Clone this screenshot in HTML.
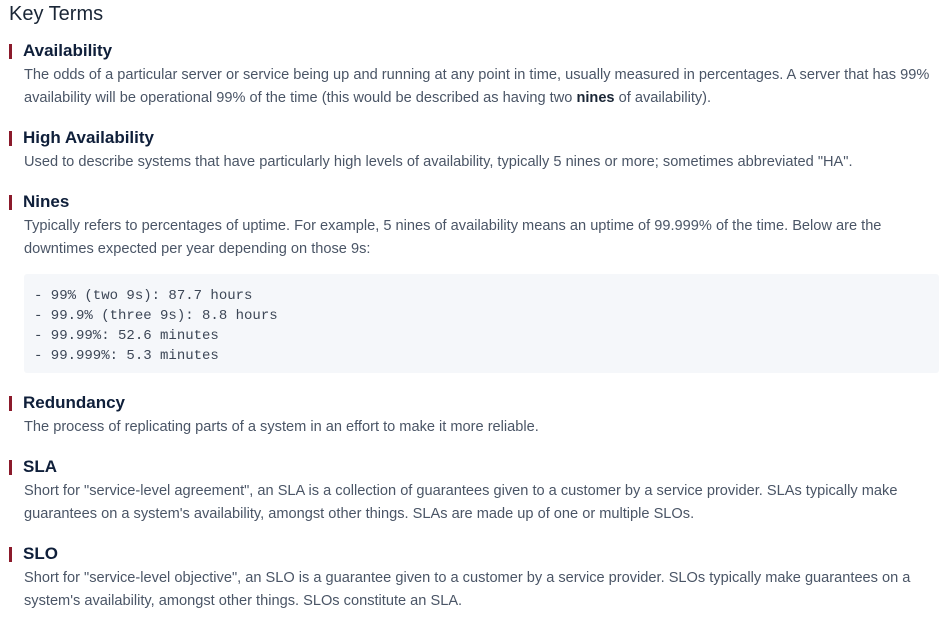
<!DOCTYPE html>
<html><head><style>
body{margin:0;background:#fff;font-family:"Liberation Sans",sans-serif;width:939px;height:626px;overflow:hidden;position:relative}
.t{position:absolute;left:9px;top:3px;font-size:20px;color:#1a2636;margin:0;font-weight:normal}
.h{position:absolute;left:9px;font-size:17px;font-weight:bold;color:#0f1f3a;height:20px;line-height:20px;padding-left:14px}
.h:before{content:"";position:absolute;left:0;top:3px;width:3px;height:15px;background:#8b1a2b}
.p{position:absolute;left:24px;right:0px;font-size:14.6px;line-height:23px;color:#4a5566}
.p b{color:#1a2636}
.c{position:absolute;left:24px;width:915px;top:274px;height:99px;background:#f5f7fa;border-radius:3px;box-sizing:border-box;padding:12px 0 0 10px;font-family:"Liberation Mono",monospace;font-size:14px;line-height:20px;color:#3c4656;white-space:pre}
</style></head><body>
<h1 class="t">Key Terms</h1>
<div class="h" style="top:41px">Availability</div>
<div class="p" style="top:64px">The odds of a particular server or service being up and running at any point in time, usually measured in percentages. A server that has 99% availability will be operational 99% of the time (this would be described as having two <b>nines</b> of availability).</div>
<div class="h" style="top:128px">High Availability</div>
<div class="p" style="top:151px">Used to describe systems that have particularly high levels of availability, typically 5 nines or more; sometimes abbreviated "HA".</div>
<div class="h" style="top:192px">Nines</div>
<div class="p" style="top:215px">Typically refers to percentages of uptime. For example, 5 nines of availability means an uptime of 99.999% of the time. Below are the<br>downtimes expected per year depending on those 9s:</div>
<div class="c">- 99% (two 9s): 87.7 hours
- 99.9% (three 9s): 8.8 hours
- 99.99%: 52.6 minutes
- 99.999%: 5.3 minutes</div>
<div class="h" style="top:393px">Redundancy</div>
<div class="p" style="top:416px">The process of replicating parts of a system in an effort to make it more reliable.</div>
<div class="h" style="top:457px">SLA</div>
<div class="p" style="top:480px">Short for "service-level agreement", an SLA is a collection of guarantees given to a customer by a service provider. SLAs typically make<br>guarantees on a system's availability, amongst other things. SLAs are made up of one or multiple SLOs.</div>
<div class="h" style="top:544px">SLO</div>
<div class="p" style="top:567px">Short for "service-level objective", an SLO is a guarantee given to a customer by a service provider. SLOs typically make guarantees on a<br>system's availability, amongst other things. SLOs constitute an SLA.</div>
</body></html>
